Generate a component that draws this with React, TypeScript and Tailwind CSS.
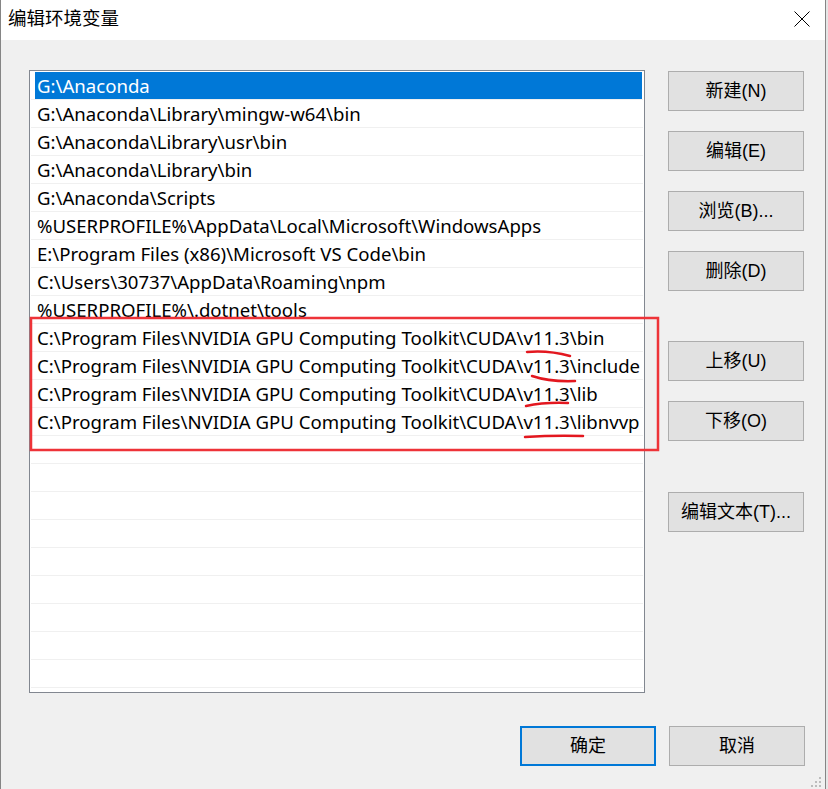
import React from 'react'

const paths = [
  String.raw`G:\Anaconda`,
  String.raw`G:\Anaconda\Library\mingw-w64\bin`,
  String.raw`G:\Anaconda\Library\usr\bin`,
  String.raw`G:\Anaconda\Library\bin`,
  String.raw`G:\Anaconda\Scripts`,
  String.raw`%USERPROFILE%\AppData\Local\Microsoft\WindowsApps`,
  String.raw`E:\Program Files (x86)\Microsoft VS Code\bin`,
  String.raw`C:\Users\30737\AppData\Roaming\npm`,
  String.raw`%USERPROFILE%\.dotnet\tools`,
  String.raw`C:\Program Files\NVIDIA GPU Computing Toolkit\CUDA\v11.3\bin`,
  String.raw`C:\Program Files\NVIDIA GPU Computing Toolkit\CUDA\v11.3\include`,
  String.raw`C:\Program Files\NVIDIA GPU Computing Toolkit\CUDA\v11.3\lib`,
  String.raw`C:\Program Files\NVIDIA GPU Computing Toolkit\CUDA\v11.3\libnvvp`,
]

const rows = [...paths, ...Array(22 - paths.length).fill('')]

const cjk = "font-['Liberation_Sans','Noto_Sans_CJK_SC',sans-serif]"

function Btn({ label, primary = false }: { label: string; primary?: boolean }) {
  return (
    <button
      className={`flex h-[40px] w-[136px] items-center justify-center bg-[#e1e1e1] text-[18px] text-black ${cjk} ${
        primary ? 'border-2 border-[#0078d7]' : 'border border-[#adadad]'
      }`}
    >
      {label}
    </button>
  )
}

export default function App() {
  return (
    <div className="flex h-[789px] w-[828px] bg-[#e6e6e6]">
      <div className="relative flex h-full w-[826px] flex-col border-x border-[#858585] bg-[#f0f0f0]">
        {/* title bar */}
        <div className="flex h-[40px] items-center justify-between bg-white pl-[7px] pr-[15px]">
          <span className={`-mt-[2px] text-[18.5px] text-black ${cjk}`}>编辑环境变量</span>
          <svg width="16" height="16" viewBox="0 0 16 16" className="-mt-[2px]">
            <path d="M0.5 0.5 L15.5 15.5 M15.5 0.5 L0.5 15.5" stroke="#000" strokeWidth="1" fill="none" />
          </svg>
        </div>

        {/* body */}
        <div className="flex pl-[28px] pt-[30px]">
          <div className="h-[623px] w-[616px] overflow-hidden border border-[#828790] bg-white pt-[1px] pl-[1px] pr-[1px]">
            {rows.map((p, i) => (
              <div key={i} className="h-[28px] border-b border-[#f0f0f0]">
                {i === 0 ? (
                  <div className="ml-[4px] mr-[1px] flex h-[27px] items-center bg-[#0078d7] pl-[2px] text-[18.6px] text-white font-['Noto_Sans',sans-serif]">
                    {p}
                  </div>
                ) : (
                  <div className="ml-[4px] flex h-[27px] items-center whitespace-nowrap pl-[2px] text-[18.6px] text-black font-['Noto_Sans',sans-serif]">
                    {p}
                  </div>
                )}
              </div>
            ))}
          </div>

          <div className="ml-[23px] flex flex-col">
            <div className="mt-[1px] flex flex-col gap-[20px]">
              <Btn label="新建(N)" />
              <Btn label="编辑(E)" />
              <Btn label="浏览(B)..." />
              <Btn label="删除(D)" />
            </div>
            <div className="mt-[50px] flex flex-col gap-[20px]">
              <Btn label="上移(U)" />
              <Btn label="下移(O)" />
            </div>
            <div className="mt-[51px]">
              <Btn label="编辑文本(T)..." />
            </div>
          </div>
        </div>

        <div className="mt-[33px] flex justify-end gap-[13px] pr-[20px]">
          <Btn label="确定" primary />
          <Btn label="取消" />
        </div>

        {/* size grip */}
        <div className="absolute bottom-[2px] right-[4px] grid grid-cols-3 gap-[2px]">
          <span className="h-[2px] w-[2px]" />
          <span className="h-[2px] w-[2px]" />
          <span className="h-[2px] w-[2px] bg-[#bcbcbc]" />
          <span className="h-[2px] w-[2px]" />
          <span className="h-[2px] w-[2px] bg-[#bcbcbc]" />
          <span className="h-[2px] w-[2px] bg-[#bcbcbc]" />
          <span className="h-[2px] w-[2px] bg-[#bcbcbc]" />
          <span className="h-[2px] w-[2px] bg-[#bcbcbc]" />
          <span className="h-[2px] w-[2px] bg-[#bcbcbc]" />
        </div>

        {/* red annotation */}
        <svg className="pointer-events-none absolute left-[-1px] top-0" width="828" height="789">
          <rect x="31" y="318" width="627" height="132" fill="none" stroke="#ee3338" strokeWidth="2.5" />
          <g stroke="#e3171f" strokeWidth="2.5" fill="none" strokeLinecap="round">
            <path d="M527 352 Q548 350 570 356" />
            <path d="M532 376 Q550 382 575 381" />
            <path d="M526 406 Q545 402 568 403" />
            <path d="M525 437 Q555 435 583 436" />
          </g>
        </svg>
      </div>
    </div>
  )
}
